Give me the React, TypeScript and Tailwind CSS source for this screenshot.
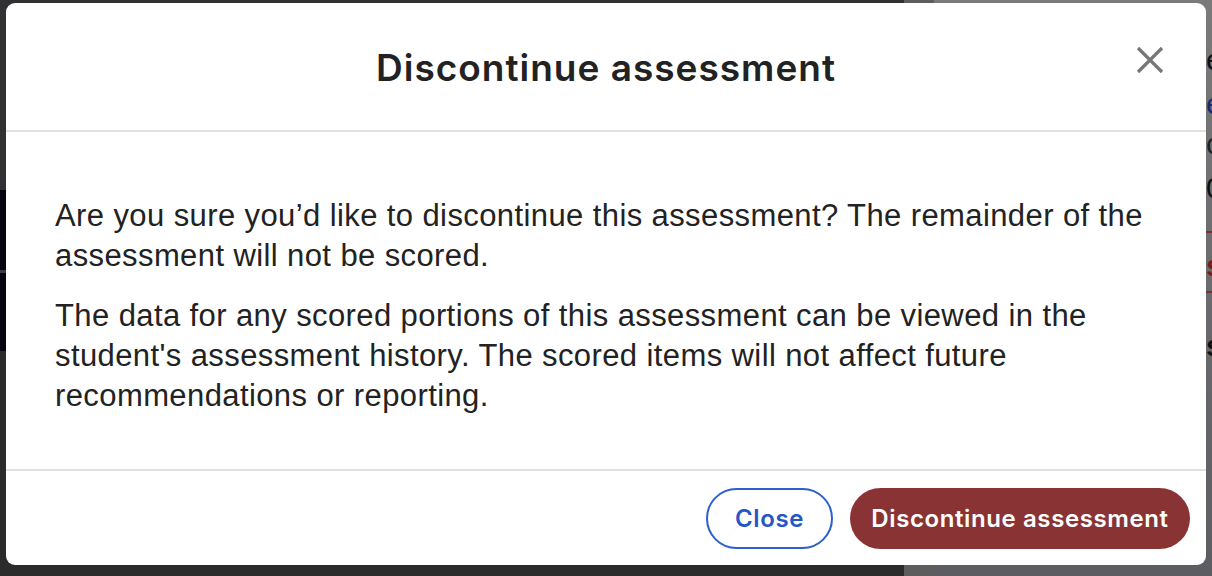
const rightBits = [
  { top: 44, text: "e", cls: "text-[#111]" },
  { top: 88, text: "e", cls: "text-[#1a2a6a]" },
  { top: 128, text: "c", cls: "text-[#222]" },
  { top: 172, text: "0", cls: "text-[#111]" },
  { top: 250, text: "s", cls: "text-[#7a1c1c] font-bold" },
  { top: 330, text: "s", cls: "text-[#111] font-bold" },
];

const CloseIcon = () => (
  <svg width="28" height="28" viewBox="0 0 28 28" fill="none">
    <path d="M2 2 L26 26 M26 2 L2 26" stroke="#777" strokeWidth="3.2" strokeLinecap="butt" />
  </svg>
);

const DiscontinueModal = () => {
  return (
    <div className="absolute left-[6px] top-[3px] w-[1200px] h-[562px] bg-white rounded-[9px] flex flex-col overflow-hidden">
      {/* header */}
      <div className="relative h-[129px] border-b-2 border-[#e0e0e0] flex items-center justify-center">
        <h2 className="font-['Inter',sans-serif] font-semibold text-[37px] tracking-[1px] text-[#222] pt-[2px]">
          Discontinue assessment
        </h2>
        <button className="absolute right-[42px] top-[43px]">
          <CloseIcon />
        </button>
      </div>

      {/* body */}
      <div className="flex-1 px-[49px] pt-[64px] font-['Liberation_Sans',Arial,sans-serif] text-[31px] leading-[40px] tracking-[0.4px] text-[#222]">
        <p>
          Are you sure you’d like to discontinue this assessment? The remainder of the assessment will
          not be scored.
        </p>
        <p className="mt-[20px]">
          The data for any scored portions of this assessment can be viewed in the student's
          assessment history. The scored items will not affect future recommendations or reporting.
        </p>
      </div>

      {/* footer */}
      <div className="border-t-2 border-[#e0e0e0] h-[96px] flex items-center justify-end gap-[17px] pr-[16px] pt-[1px]">
        <button className="h-[61px] w-[127px] rounded-full border-2 border-[#2d5fcf] text-[#2556c8] font-['Inter',sans-serif] font-semibold text-[24px] tracking-[0.6px]">
          Close
        </button>
        <button className="h-[61px] w-[340px] rounded-full bg-[#8a3335] text-white font-['Inter',sans-serif] font-semibold text-[24px] tracking-[0.6px]">
          Discontinue assessment
        </button>
      </div>
    </div>
  );
};

export default function App() {
  return (
    <div className="relative w-[1212px] h-[576px] overflow-hidden bg-[#2e2e30]">
      {/* dimmed page behind */}
      <div className="flex h-full">
        <div className="w-[904px] flex flex-col">
          <div className="h-[190px] bg-[#313133]" />
          <div className="h-[80px] bg-[#04050f]" />
          <div className="h-[3px] bg-[#3a3a3a]" />
          <div className="h-[78px] bg-[#04050f]" />
          <div className="flex-1 bg-[#2b2b2b]" />
        </div>
        <div className="w-[30px] bg-[#5d5d5d]" />
        <div className="flex-1 relative bg-gradient-to-b from-[#7a7a7a] to-[#5c5d62]">
          {rightBits.map((b, i) => (
            <span
              key={i}
              className={`absolute left-[272px] font-['Liberation_Sans',Arial,sans-serif] text-[30px] leading-[32px] ${b.cls}`}
              style={{ top: b.top }}
            >
              {b.text}
            </span>
          ))}
          <div className="absolute left-[270px] top-[231px] w-[20px] h-[2px] bg-[#7a3030]" />
          <div className="absolute left-[270px] top-[291px] w-[20px] h-[2px] bg-[#7a3030]" />
        </div>
      </div>

      <DiscontinueModal />
    </div>
  );
}
